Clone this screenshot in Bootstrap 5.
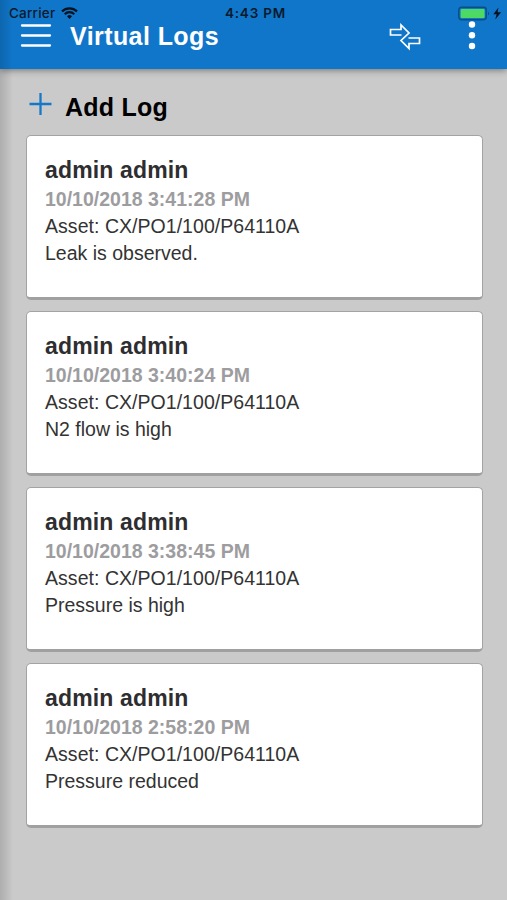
<!DOCTYPE html>
<html lang="en">
<head>
<meta charset="utf-8">
<meta name="viewport" content="width=device-width, initial-scale=1">
<title>Virtual Logs</title>
<link href="https://cdn.jsdelivr.net/npm/bootstrap@5.3.0/dist/css/bootstrap.min.css" rel="stylesheet">
<style>
  body { background: #cacaca; font-family: "Liberation Sans", Arial, sans-serif; font-size: 19.5px; line-height: 27px; color: #333; height: 900px; overflow: hidden; }
  .edge-shade { position: absolute; inset: 0 auto 0 0; width: 13px; background: linear-gradient(90deg, rgba(0,0,0,.14), rgba(0,0,0,.1) 30%, rgba(0,0,0,0)); z-index: 5; }
  .app-header { background: #1076ca; height: 69px; box-shadow: 0 1px 7px rgba(0,0,0,.45); }
  .status-line { height: 21px; padding: 6px 5px 0 9px; font: 500 13.5px/15px Inter, sans-serif; color: #0a1a2c; }
  .status-line .clock { font-weight: 600; letter-spacing: .8px; }
  .status-line .carrier { letter-spacing: .2px; }
  .status-line > * { flex: 1 1 0; }
  .wifi { margin: -2px 0 0 6px; }
  .title-line { height: 29px; padding: 0 30px 0 20px; }
  .rounded-face { font-weight: 700; white-space: nowrap; }
  .app-title { font-size: 25px; line-height: 30px; letter-spacing: .42px; color: #fff; margin-left: 18px; }
  .swap-icon { margin-top: 3px; }
  .more-icon { margin-left: 46px; }
  .add-line { height: 66px; padding: 4px 0 0 28px; }
  .add-label { font-size: 25px; line-height: 30px; letter-spacing: .25px; color: #000; margin: 5px 0 0 13px; }
  .log-list { padding: 0 24.5px 0 25.5px; gap: 11px; }
  .log-card { height: 165px; border: 1px solid #a3a3a3; border-bottom: 3px solid #a0a0a0; border-radius: 5px; padding: 19px 18.5px 0; color: #333; }
  .log-name { font-size: 23px; line-height: 31px; letter-spacing: .15px; margin: 0; color: #2e2e30; }
  .log-date { color: #9d9d9f; font-weight: 700; }
  .log-asset { letter-spacing: .04px; }
  svg { display: block; flex: none; }
</style>
</head>
<body class="position-relative">
<div class="edge-shade"></div>
<header class="app-header position-relative">
  <div class="status-line d-flex align-items-center">
    <div class="d-flex align-items-center">
      <span class="carrier">Carrier</span>
      <svg class="wifi" width="17" height="12" viewBox="0 0 17 12" fill="none" stroke="#05121f" stroke-width="2.2"><path d="M1 4.4a10.7 10.7 0 0 1 15 0M3.7 7.2a6.8 6.8 0 0 1 9.6 0"/><path d="M8.5 12 6 9.3a3.6 3.6 0 0 1 5 0z" fill="#05121f" stroke="none"/></svg>
    </div>
    <div class="clock text-center">4:43 PM</div>
    <div class="d-flex justify-content-end">
      <svg width="44" height="15" viewBox="0 0 44 15"><rect x=".8" y="1.300" width="27.4" height="12.4" rx="2.6" fill="#1076ca" stroke="#0a4c84" stroke-width="1.4"/><rect x="2.600" y="3" width="24" height="9" rx="1" fill="#4cd964"/><path d="M30 5.500q2.200 2 0 4z" fill="#0a4c84"/><path d="M40.500 1.500 35.300 8.300h3.300L37.300 13.500l5.800-7.200h-3.600z" fill="#05121f"/></svg>
    </div>
  </div>
  <div class="title-line d-flex align-items-center">
    <svg width="32" height="26" viewBox="0 0 32 26" stroke="#fff" stroke-width="2.3" stroke-linecap="round"><path d="M2 2.500h28M2 12.500h28M2 22.500h28"/></svg>
    <h1 class="app-title rounded-face mb-0">Virtual Logs</h1>
    <svg class="swap-icon ms-auto" width="32" height="28" viewBox="0 0 32 28" fill="none" stroke="#fff" stroke-width="1.7"><path d="M12.500 12H1.500V6.500H12V2l8 8-8 7.500 8 8V20.500h10.500V15H19.500"/></svg>
    <svg class="more-icon" width="10" height="30" viewBox="0 0 10 30" fill="#fff"><circle cx="5" cy="3.500" r="3.200"/><circle cx="5" cy="14.300" r="3.200"/><circle cx="5" cy="25" r="3.200"/></svg>
  </div>
</header>
<main>
  <div class="add-line d-flex align-items-center">
    <svg width="24" height="24" viewBox="0 0 24 24" stroke="#1478ca" stroke-width="2.3"><path d="M12.500 1v22M1.500 12h22"/></svg>
    <h2 class="add-label rounded-face">Add Log</h2>
  </div>
  <div class="log-list d-flex flex-column">
    <article class="card log-card">
      <h3 class="log-name rounded-face">admin admin</h3>
      <div class="log-date">10/10/2018 3:41:28 PM</div>
      <div class="log-asset">Asset: CX/PO1/100/P64110A</div>
      <div>Leak is observed.</div>
    </article>
    <article class="card log-card">
      <h3 class="log-name rounded-face">admin admin</h3>
      <div class="log-date">10/10/2018 3:40:24 PM</div>
      <div class="log-asset">Asset: CX/PO1/100/P64110A</div>
      <div>N2 flow is high</div>
    </article>
    <article class="card log-card">
      <h3 class="log-name rounded-face">admin admin</h3>
      <div class="log-date">10/10/2018 3:38:45 PM</div>
      <div class="log-asset">Asset: CX/PO1/100/P64110A</div>
      <div>Pressure is high</div>
    </article>
    <article class="card log-card">
      <h3 class="log-name rounded-face">admin admin</h3>
      <div class="log-date">10/10/2018 2:58:20 PM</div>
      <div class="log-asset">Asset: CX/PO1/100/P64110A</div>
      <div>Pressure reduced</div>
    </article>
  </div>
</main>
<script src="https://cdn.jsdelivr.net/npm/bootstrap@5.3.0/dist/js/bootstrap.bundle.min.js"></script>
</body>
</html>
